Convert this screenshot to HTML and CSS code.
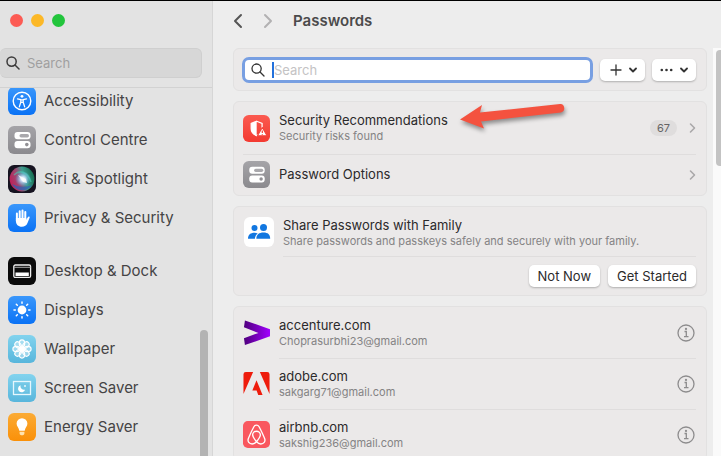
FILE: index.html
```
<!DOCTYPE html>
<html lang="en">
<head>
  <meta charset="UTF-8">
  <title>Passwords</title>
  <link rel="stylesheet" href="styles.css">
</head>
<body>
  <div class="window">
    <aside class="sidebar">
      <div class="traffic-lights">
        <span class="light red"></span>
        <span class="light yellow"></span>
        <span class="light green"></span>
      </div>

      <label class="sidebar-search">
        <svg width="14" height="14" viewBox="0 0 14 14" fill="none" stroke="#3c3b3b" stroke-width="1.5" stroke-linecap="round"><circle cx="5.6" cy="5.6" r="4.6"/><path d="M9 9l4 4"/></svg>
        <input type="text" placeholder="Search" aria-label="Search settings">
      </label>

      <nav class="menu">
        <div class="menu-list">
          <a href="#" class="menu-item">
            <svg class="icon" viewBox="0 0 28 28"><defs><linearGradient id="blue" x2="0" y2="1"><stop offset="0" stop-color="#3a97fb"/><stop offset="1" stop-color="#0a72f5"/></linearGradient></defs><rect width="28" height="28" rx="6" fill="url(#blue)"/><circle cx="14" cy="14" r="8.8" fill="none" stroke="#fff" stroke-width="1.4"/><circle cx="14" cy="9.3" r="1.4" fill="#fff"/><path d="M9.5 11.8l3.3.8v2.7l-1.5 4.6M18.5 11.8l-3.3.8v2.7l1.5 4.6M12.8 12.8h2.4v2.6h-2.4z" fill="none" stroke="#fff" stroke-width="1.3" stroke-linecap="round" stroke-linejoin="round"/></svg>
            Accessibility
          </a>
          <a href="#" class="menu-item">
            <svg class="icon" viewBox="0 0 28 28"><defs><linearGradient id="gray" x2="0" y2="1"><stop offset="0" stop-color="#a5a4a8"/><stop offset="1" stop-color="#8b8a8e"/></linearGradient></defs><rect width="28" height="28" rx="6" fill="url(#gray)"/><rect x="6.5" y="6" width="16" height="7.2" rx="3" fill="#fff"/><rect x="11.5" y="8" width="9.5" height="3.4" rx="1.7" fill="#a9a8ac"/><rect x="6.5" y="15" width="16" height="7.2" rx="3" fill="#fff"/><circle cx="18.8" cy="18.6" r="1.8" fill="#929195"/></svg>
            Control Centre
          </a>
          <a href="#" class="menu-item">
            <svg class="icon" viewBox="0 0 28 28"><defs><linearGradient id="siri" x1="0" y1=".6" x2="1" y2=".3"><stop offset="0" stop-color="#c01f58"/><stop offset=".35" stop-color="#9c4a72"/><stop offset=".6" stop-color="#3f9c90"/><stop offset="1" stop-color="#126a4b"/></linearGradient><radialGradient id="glow"><stop offset="0" stop-color="#fff"/><stop offset=".3" stop-color="#d5e7ff" stop-opacity=".9"/><stop offset="1" stop-color="#4faef0" stop-opacity="0"/></radialGradient></defs><rect width="28" height="28" rx="6" fill="#161320"/><circle cx="14" cy="14" r="12.4" fill="url(#siri)"/><path d="M4 19a11.6 11.6 0 0020 1c-5 2-12 3-20-1z" fill="#2f62b5" opacity=".75"/><path d="M6 10c6-6 14-3 17 7" fill="none" stroke="#45d6b5" stroke-width="1.5" opacity=".55"/><circle cx="15" cy="14" r="8" fill="url(#glow)"/><path d="M10 10l8 4 1 4-4-1z" fill="#fff" opacity=".8"/></svg>
            Siri &amp; Spotlight
          </a>
          <a href="#" class="menu-item">
            <svg class="icon" viewBox="0 0 28 28"><rect width="28" height="28" rx="6" fill="url(#blue)"/><path d="M8.9 9.5v7.5M11.7 7.3v8M14.5 6.5v9M17.3 8v8" stroke="#fff" stroke-width="2" stroke-linecap="round"/><path d="M7.9 14h10.4v2l1.600-3c.6-1.100 2.100-.5 1.700.7l-2.100 5.300c-1 2.600-3 3.700-5.600 3.700-3.700 0-6-2.300-6-6z" fill="#fff"/></svg>
            Privacy &amp; Security
          </a>
          <a href="#" class="menu-item group-start">
            <svg class="icon" viewBox="0 0 28 28"><rect width="28" height="28" rx="6" fill="#0b0b0b"/><rect x="5.8" y="8" width="16.8" height="12.4" rx="1.5" fill="none" stroke="#eee" stroke-width="1.3"/><path d="M6 10.3h16.5" stroke="#aaa"/><rect x="7.5" y="15.5" width="13.3" height="3.5" fill="#fff"/></svg>
            Desktop &amp; Dock
          </a>
          <a href="#" class="menu-item">
            <svg class="icon" viewBox="0 0 28 28"><rect width="28" height="28" rx="6" fill="url(#blue)"/><circle cx="14" cy="14" r="4.4" fill="#fff"/><path d="M14 6v1.3M14 20.7V22M6 14h1.3M20.7 14H22M8.300 8.300l1 1M18.700 18.700l1 1M8.300 19.700l1-1M18.700 9.300l1-1" stroke="#fff" stroke-width="1.5" stroke-linecap="round"/></svg>
            Displays
          </a>
          <a href="#" class="menu-item">
            <svg class="icon" viewBox="0 0 28 28"><defs><linearGradient id="sky" x2="0" y2="1"><stop offset="0" stop-color="#82d3ee"/><stop offset="1" stop-color="#58b6dc"/></linearGradient></defs><rect width="28" height="28" rx="6" fill="url(#sky)"/><g fill="#fff" fill-opacity=".35" stroke="#fff" stroke-width="1.2"><ellipse id="petal" cx="14" cy="8.400" rx="2.700" ry="3.500"/><use href="#petal" transform="rotate(45 14 14)"/><use href="#petal" transform="rotate(90 14 14)"/><use href="#petal" transform="rotate(135 14 14)"/><use href="#petal" transform="rotate(180 14 14)"/><use href="#petal" transform="rotate(225 14 14)"/><use href="#petal" transform="rotate(270 14 14)"/><use href="#petal" transform="rotate(315 14 14)"/></g><circle cx="14" cy="14" r="2.3" fill="#fff"/></svg>
            Wallpaper
          </a>
          <a href="#" class="menu-item">
            <svg class="icon" viewBox="0 0 28 28"><rect width="28" height="28" rx="6" fill="url(#sky)"/><rect x="5.5" y="7.5" width="17" height="13" fill="none" stroke="#e6f7fd" stroke-width="1.3"/><rect x="8" y="10" width="12" height="8" fill="#71c6e4"/><path d="M12.500 11.300a3.600 3.600 0 104.600 4.400 3.700 3.700 0 01-4.600-4.400z" fill="#fff"/><path d="M17 11v2M16 12h2" stroke="#fff" stroke-width=".8"/></svg>
            Screen Saver
          </a>
          <a href="#" class="menu-item">
            <svg class="icon" viewBox="0 0 28 28"><defs><linearGradient id="orange" x2="0" y2="1"><stop offset="0" stop-color="#fbab35"/><stop offset="1" stop-color="#fa9008"/></linearGradient></defs><rect width="28" height="28" rx="6" fill="url(#orange)"/><path d="M14 5.200a5.400 5.400 0 00-5.400 5.400c0 3 2.300 4 2.700 7.200h5.400c.4-3.200 2.700-4.200 2.700-7.200A5.400 5.400 0 0014 5.200z" fill="#fff"/><path d="M11.600 18.800h4.800v1.700c0 1-1 1.800-2.400 1.800s-2.400-.8-2.400-1.800z" fill="#ffe3ae"/></svg>
            Energy Saver
          </a>
        </div>
        <div class="sidebar-thumb"></div>
      </nav>
    </aside>

    <main class="content">
      <header class="toolbar">
        <button type="button" class="nav-btn" aria-label="Back"><svg width="10" height="16" viewBox="0 0 10 16" fill="none" stroke="#555" stroke-width="2" stroke-linecap="round" stroke-linejoin="round"><path d="M8 2L2 8l6 6"/></svg></button>
        <button type="button" class="nav-btn" aria-label="Forward"><svg width="10" height="16" viewBox="0 0 10 16" fill="none" stroke="#b2b1b2" stroke-width="2" stroke-linecap="round" stroke-linejoin="round"><path d="M2 2l6 6-6 6"/></svg></button>
        <h1>Passwords</h1>
      </header>

      <div class="scroller">
        <div class="cards">
          <section class="card search-card">
            <label class="search-box">
              <svg width="14" height="14" viewBox="0 0 14 14" fill="none" stroke="#333" stroke-width="1.3" stroke-linecap="round"><circle cx="5.6" cy="5.6" r="4.6"/><path d="M9 9l4 4"/></svg>
              <span class="caret"></span>
              <input type="text" placeholder="Search" aria-label="Search passwords">
            </label>
            <button type="button" class="btn menu-btn" aria-label="Add">
              <svg width="12" height="12" viewBox="0 0 12 12" stroke="#333" stroke-width="1.3" stroke-linecap="round"><path d="M6 1v10M1 6h10"/></svg>
              <svg width="8" height="6" viewBox="0 0 8 6" fill="none" stroke="#333" stroke-width="1.8" stroke-linecap="round" stroke-linejoin="round"><path d="M1 1.500l3 3 3-3"/></svg>
            </button>
            <button type="button" class="btn menu-btn" aria-label="More">
              <svg width="13" height="4" viewBox="0 0 13 4" fill="#333"><circle cx="1.800" cy="2" r="1.300"/><circle cx="6.500" cy="2" r="1.300"/><circle cx="11.200" cy="2" r="1.300"/></svg>
              <svg width="8" height="6" viewBox="0 0 8 6" fill="none" stroke="#333" stroke-width="1.8" stroke-linecap="round" stroke-linejoin="round"><path d="M1 1.500l3 3 3-3"/></svg>
            </button>
          </section>

          <section class="card">
            <a href="#" class="row">
              <svg class="row-icon" viewBox="0 0 28 28"><defs><linearGradient id="red" x2="0" y2="1"><stop offset="0" stop-color="#fb5a50"/><stop offset="1" stop-color="#f33a31"/></linearGradient></defs><rect width="28" height="28" rx="6" fill="url(#red)"/><path d="M14.200 6.500l5.600 2.200v5.500c0 3.400-2.200 5.800-5.600 7.200-3.500-1.400-5.700-3.800-5.700-7.200V8.700z" fill="none" stroke="#fff" stroke-width="1.3"/><path d="M14.200 6.500v15c-3.500-1.500-5.700-3.900-5.700-7.300V8.700z" fill="#fff"/><path d="M20 13l5 8.500H15z" fill="#fff" stroke="#f4463c" stroke-width="1.2" stroke-linejoin="round"/><path d="M20 16v2.600M20 19.600v.9" stroke="#f33a31" stroke-width="1.2"/></svg>
              <div class="row-text">
                <div class="title">Security Recommendations</div>
                <div class="sub">Security risks found</div>
              </div>
              <span class="badge">67</span>
              <svg class="chevron" viewBox="0 0 7 12"><path d="M1.500 2l4 4-4 4"/></svg>
            </a>
            <a href="#" class="row short">
              <svg class="row-icon" viewBox="0 0 28 28"><rect width="28" height="28" rx="6" fill="url(#gray)"/><rect x="6.5" y="6" width="16" height="7.2" rx="3" fill="#fff"/><rect x="11.5" y="8" width="9.5" height="3.4" rx="1.7" fill="#a9a8ac"/><rect x="6.5" y="15" width="16" height="7.2" rx="3" fill="#fff"/><circle cx="18.8" cy="18.6" r="1.8" fill="#929195"/></svg>
              <div class="row-text">
                <div class="title">Password Options</div>
              </div>
              <svg class="chevron" viewBox="0 0 7 12"><path d="M1.500 2l4 4-4 4"/></svg>
            </a>
          </section>

          <section class="card share-card">
            <svg class="share-icon" viewBox="0 0 30 30"><rect width="30" height="30" rx="6" fill="#fff"/><g fill="#1277e0"><circle cx="10.500" cy="11" r="3"/><path d="M4 21.700c0-4 2.500-6 6.500-6 1.300 0 2.300.2 3.200.7-1.700 1.300-2.700 3-2.800 5.300z"/><circle cx="19.500" cy="10.600" r="3.500"/><path d="M12.300 21.700c0-4.200 2.800-6.200 7.200-6.200s6.700 2 6.700 6.200z"/></g></svg>
            <div class="share-body">
              <div class="share-text">
                <div class="title">Share Passwords with Family</div>
                <div class="sub">Share passwords and passkeys safely and securely with your family.</div>
              </div>
              <div class="share-actions">
                <button type="button" class="btn">Not Now</button>
                <button type="button" class="btn">Get Started</button>
              </div>
            </div>
          </section>

          <section class="card accounts">
            <div class="row">
              <svg class="row-icon" viewBox="0 0 28 28"><defs><linearGradient id="purple"><stop offset="0" stop-color="#4f007c"/><stop offset="1" stop-color="#a100ff"/></linearGradient></defs><path d="M2 1.500l26 9v7.500L2 27l-1-7 15-5.500L1 8.500z" fill="url(#purple)"/></svg>
              <div class="row-text">
                <div class="title">accenture.com</div>
                <div class="sub">Choprasurbhi23@gmail.com</div>
              </div>
              <button type="button" class="info" aria-label="Info for accenture.com"><svg viewBox="0 0 18 18"><circle cx="9" cy="9" r="8"/><path d="M7.500 7.500h1.800v5M7 12.700h4.500"/><circle cx="9" cy="4.900" r=".5"/></svg></button>
            </div>
            <div class="row">
              <svg class="row-icon" viewBox="0 0 28 28"><path d="M3 2h7.500L.5 25V4.500A2.500 2.500 0 013 2zM17.500 2H25a2.500 2.500 0 012.500 2.500V25zM14 10.500L20.300 26h-4.500l-1.700-4.700H9.700z" fill="#ee1c0c"/></svg>
              <div class="row-text">
                <div class="title">adobe.com</div>
                <div class="sub">sakgarg71@gmail.com</div>
              </div>
              <button type="button" class="info" aria-label="Info for adobe.com"><svg viewBox="0 0 18 18"><circle cx="9" cy="9" r="8"/><path d="M7.500 7.500h1.800v5M7 12.700h4.500"/><circle cx="9" cy="4.900" r=".5"/></svg></button>
            </div>
            <div class="row">
              <svg class="row-icon" viewBox="0 0 28 28"><rect width="28" height="28" rx="5" fill="#f9585f"/><path d="M14 21.500c-2.500-3-4-5-4-7.200a4 3.700 0 018 0c0 2.200-1.500 4.200-4 7.200zm0 0c-1.400 1.500-2.800 2.300-4.500 2.300-3 0-5-2.500-4-5.300C6.600 15.500 10 8.500 11.300 6c1.300-2.300 4.100-2.300 5.400 0 1.300 2.500 4.700 9.500 5.800 12.500 1 2.800-1 5.300-4 5.300-1.700 0-3.100-.8-4.500-2.300z" fill="none" stroke="#fff" stroke-width="1.4"/></svg>
              <div class="row-text">
                <div class="title">airbnb.com</div>
                <div class="sub">sakshig236@gmail.com</div>
              </div>
              <button type="button" class="info" aria-label="Info for airbnb.com"><svg viewBox="0 0 18 18"><circle cx="9" cy="9" r="8"/><path d="M7.500 7.500h1.800v5M7 12.700h4.500"/><circle cx="9" cy="4.900" r=".5"/></svg></button>
            </div>
          </section>
        </div>
        <div class="track"><div class="thumb"></div></div>

        <!-- arrow pointing at the first row -->
        <svg class="arrow" width="110" height="34" viewBox="0 0 110 34"><path d="M1 19.500L23 5l-2 7.500L101 4c5-.5 6 7.500 1 8.500L22 21.500l3 7z" fill="#f4523f"/></svg>
      </div>
    </main>
  </div>
</body>
</html>
```
FILE: styles.css
```
* {
  box-sizing: border-box;
}
body {
  margin: 0;
  font-family: Inter, "Liberation Sans", sans-serif;
  background: #ededed;
  color: #2b2a2b;
}
a {
  color: inherit;
  text-decoration: none;
}
button {
  font-family: inherit;
  color: inherit;
  border: none;
  padding: 0;
}
svg {
  display: block;
  flex: none;
}
input {
  flex: 1;
  min-width: 0;
  padding: 0;
  border: none;
  outline: none;
  background: none;
  font-family: inherit;
  font-size: 13px;
}
.window {
  display: flex;
  height: 100vh;
  overflow: hidden;
  border-top: 1px solid #000;
}

/* sidebar */
.sidebar {
  display: flex;
  flex-direction: column;
  flex: none;
  width: 213px;
  background: #e3e3e3;
  border-right: 1px solid #d6d6d6;
}
.traffic-lights {
  display: flex;
  gap: 8px;
  padding: 13px 10px 14px;
}
.light {
  width: 13px;
  height: 13px;
  border-radius: 50%;
}
.red {
  background: #fc5b54;
}
.yellow {
  background: #fcb827;
}
.green {
  background: #22c53c;
}
.sidebar-search {
  display: flex;
  align-items: center;
  gap: 7px;
  height: 30px;
  margin: 7px 10px 9px 0;
  padding-left: 6px;
  background: #d7d7d7;
  border: 1px solid #cfcfcf;
  border-left: none;
  border-radius: 6px;
}
.sidebar-search input::placeholder {
  color: #a09fa0;
}
.menu {
  position: relative;
  flex: 1;
  min-height: 0;
  overflow: hidden;
  border-top: 1px solid #d2d2d2;
}
.menu-list {
  margin-top: -7px;
}
.menu-item {
  display: flex;
  align-items: center;
  gap: 8px;
  height: 39px;
  padding-left: 8px;
  font-size: 15px;
  color: #454445;
}
.group-start {
  margin-top: 14px;
}
.icon {
  width: 28px;
  height: 28px;
}
.sidebar-thumb {
  position: absolute;
  top: 242px;
  right: 4px;
  bottom: -10px;
  width: 8px;
  border-radius: 4px;
  background: #b3b3b3;
}

/* content */
.content {
  display: flex;
  flex-direction: column;
  flex: 1;
  min-width: 0;
}
.toolbar {
  display: flex;
  align-items: center;
  flex: none;
  gap: 20px;
  height: 39px;
  padding-left: 20px;
}
.nav-btn {
  background: none;
}
h1 {
  margin: 0;
  font-size: 15px;
  font-weight: 600;
  color: #4b4a4b;
}
.scroller {
  position: relative;
  display: flex;
  flex: 1;
  gap: 6px;
  min-height: 0;
  padding: 8px 0 0 20px;
}
.cards {
  flex: 1;
  min-width: 0;
}
.card {
  margin-bottom: 10px;
  padding: 0 10px 0 9px;
  background: #ebe9e9;
  border: 1px solid #e2e1e1;
  border-radius: 6px;
}
.search-card {
  display: flex;
  align-items: center;
  gap: 7px;
  height: 43px;
  padding-left: 8px;
}
.search-box {
  display: flex;
  align-items: center;
  flex: 1;
  height: 26px;
  padding-left: 6px;
  background: #fff;
  border: 3px solid #789fe2;
  border-radius: 7px;
}
.search-box input::placeholder {
  color: #c4c3c4;
}
.caret {
  width: 2px;
  height: 16px;
  margin-left: 7px;
  background: #2371dc;
}
.btn {
  height: 22px;
  padding: 0 9px;
  background: #fff;
  border-radius: 5px;
  box-shadow: 0 1px 2px rgba(0, 0, 0, 0.25);
  font-size: 13px;
}
.menu-btn {
  display: flex;
  align-items: center;
  gap: 7px;
  padding: 0 8px;
}
.menu-btn:first-of-type {
  padding-left: 10px;
}
.row {
  display: flex;
  align-items: center;
  height: 52px;
  position: relative;
}
.row + .row::before {
  content: "";
  position: absolute;
  top: 0;
  left: 0;
  right: 0;
  height: 1px;
  background: #dfdddd;
}
.row.short {
  height: 41px;
}
.accounts .row {
  height: 51px;
}
.accounts .row + .row::before {
  left: 36px;
}
.row-icon {
  width: 27px;
  height: 27px;
}
.row-text {
  flex: 1;
  min-width: 0;
  margin-left: 9px;
}
.title {
  font-size: 13px;
  line-height: 17px;
}
.sub {
  font-size: 11px;
  line-height: 15px;
  color: #848384;
}
.badge {
  padding: 0 7px;
  background: #dfdddd;
  border-radius: 8px;
  font-size: 11px;
  line-height: 16px;
  color: #656465;
}
.chevron {
  width: 7px;
  height: 12px;
  margin-left: 12px;
  fill: none;
  stroke: #a9a8a9;
  stroke-width: 1.6;
  stroke-linecap: round;
  stroke-linejoin: round;
}
.share-card {
  display: flex;
  gap: 9px;
  padding-top: 10px;
  padding-left: 10px;
}
.share-icon {
  width: 30px;
  height: 30px;
}
.share-body {
  flex: 1;
}
.share-text {
  height: 40px;
  border-bottom: 1px solid #dfdddd;
}
.share-actions {
  display: flex;
  justify-content: flex-end;
  gap: 8px;
  padding: 8px 0;
}
.accounts {
  border-bottom: none;
}
.info {
  background: none;
}
.info svg {
  width: 20px;
  height: 18px;
  fill: none;
  stroke: #8d8c8d;
  stroke-width: 1.3;
}
.track {
  flex: none;
  width: 8px;
  padding: 2px 0 0 3px;
  background: #fafafa;
}
.thumb {
  height: 116px;
  background: #c3c3c3;
  border-radius: 4px 0 0 4px;
}
.arrow {
  position: absolute;
  top: 60px;
  left: 246px;
  filter: drop-shadow(1px 3px 2px rgba(0, 0, 0, 0.4));
}
```
